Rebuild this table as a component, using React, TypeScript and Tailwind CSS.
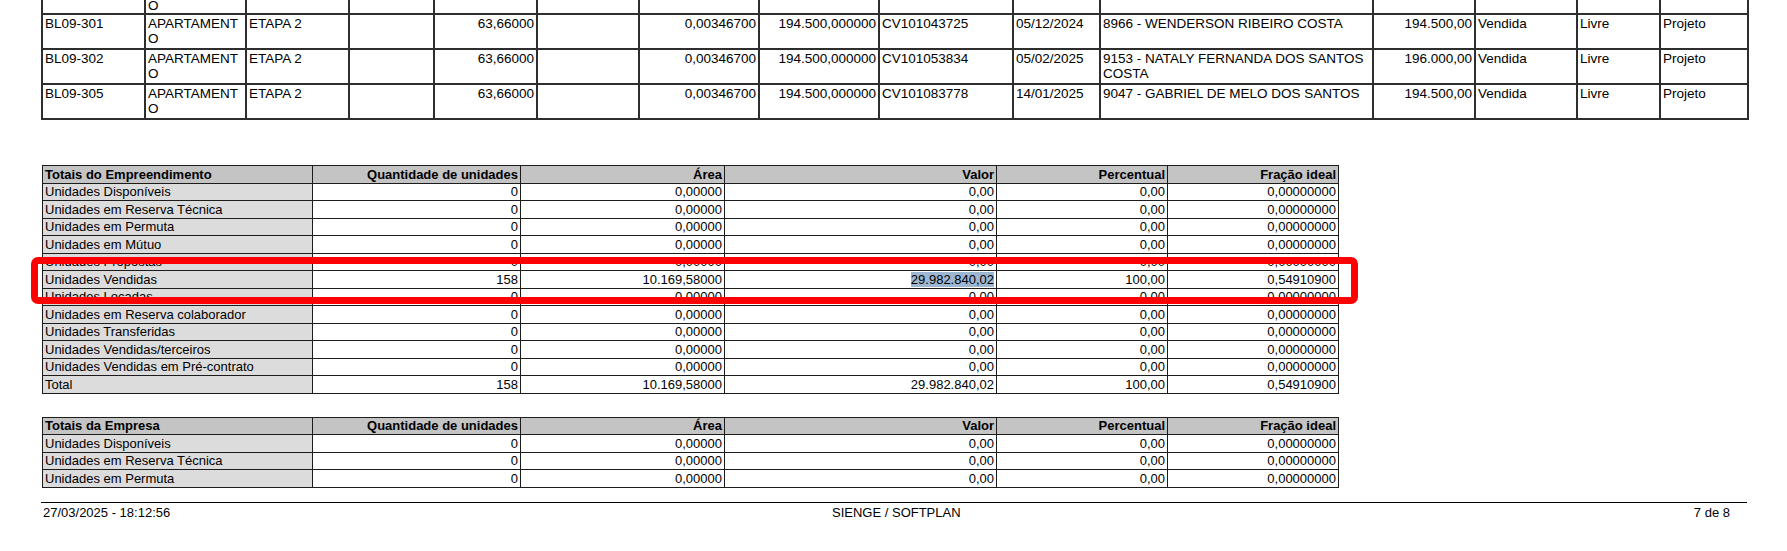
import React from "react";

const topRows: string[][] = [
  ["BL09-301", "APARTAMENT\nO", "ETAPA 2", "", "63,66000", "", "0,00346700", "194.500,000000", "CV101043725", "05/12/2024", "8966 - WENDERSON RIBEIRO COSTA", "194.500,00", "Vendida", "Livre", "Projeto"],
  ["BL09-302", "APARTAMENT\nO", "ETAPA 2", "", "63,66000", "", "0,00346700", "194.500,000000", "CV101053834", "05/02/2025", "9153 - NATALY FERNANDA DOS SANTOS\nCOSTA", "196.000,00", "Vendida", "Livre", "Projeto"],
  ["BL09-305", "APARTAMENT\nO", "ETAPA 2", "", "63,66000", "", "0,00346700", "194.500,000000", "CV101083778", "14/01/2025", "9047 - GABRIEL DE MELO DOS SANTOS", "194.500,00", "Vendida", "Livre", "Projeto"],
];

const rightCols = new Set([4, 6, 7, 11]);

const zero = ["0", "0,00000", "0,00", "0,00", "0,00000000"];
const sold = ["158", "10.169,58000", "29.982.840,02", "100,00", "0,54910900"];

const empRows: [string, string[]][] = [
  ["Unidades Disponíveis", zero],
  ["Unidades em Reserva Técnica", zero],
  ["Unidades em Permuta", zero],
  ["Unidades em Mútuo", zero],
  ["Unidades Propostas", zero],
  ["Unidades Vendidas", sold],
  ["Unidades Locadas", zero],
  ["Unidades em Reserva colaborador", zero],
  ["Unidades Transferidas", zero],
  ["Unidades Vendidas/terceiros", zero],
  ["Unidades Vendidas em Pré-contrato", zero],
  ["Total", sold],
];

const companyRows: [string, string[]][] = [
  ["Unidades Disponíveis", zero],
  ["Unidades em Reserva Técnica", zero],
  ["Unidades em Permuta", zero],
];

function Multi({ text }: { text: string }) {
  const parts = text.split("\n");
  return (
    <>
      {parts.map((p, i) => (
        <React.Fragment key={i}>
          {i > 0 && <br />}
          {p}
        </React.Fragment>
      ))}
    </>
  );
}

function TopColGroup() {
  return (
    <colgroup>
      <col className="w-[103px]" />
      <col className="w-[101px]" />
      <col className="w-[103px]" />
      <col className="w-[85px]" />
      <col className="w-[103px]" />
      <col className="w-[102px]" />
      <col className="w-[120px]" />
      <col className="w-[120px]" />
      <col className="w-[134px]" />
      <col className="w-[87px]" />
      <col className="w-[273px]" />
      <col className="w-[102px]" />
      <col className="w-[102px]" />
      <col className="w-[83px]" />
      <col className="w-[88px]" />
    </colgroup>
  );
}

const topCell = "border-2 border-[#2e2e2e] px-[2px] pt-[1px] align-top text-[13.5px] leading-[15px] text-black whitespace-nowrap overflow-hidden";

function SummaryTable({ title, rows, highlight }: { title: string; rows: [string, string[]][]; highlight?: boolean }) {
  const cell = "border border-[#1c1c1c] px-[2px] text-[13px] leading-[15px] text-black whitespace-nowrap";
  return (
    <table className="border-collapse table-fixed w-[1296px] ml-[42px]">
      <colgroup>
        <col className="w-[270px]" />
        <col className="w-[208px]" />
        <col className="w-[204px]" />
        <col className="w-[272px]" />
        <col className="w-[171px]" />
        <col className="w-[171px]" />
      </colgroup>
      <thead>
        <tr className="h-[17.5px] bg-[#c4c4c4]">
          <th className={`${cell} text-left font-bold`}>{title}</th>
          <th className={`${cell} text-right font-bold`}>Quantidade de unidades</th>
          <th className={`${cell} text-right font-bold`}>Área</th>
          <th className={`${cell} text-right font-bold`}>Valor</th>
          <th className={`${cell} text-right font-bold`}>Percentual</th>
          <th className={`${cell} text-right font-bold`}>Fração ideal</th>
        </tr>
      </thead>
      <tbody>
        {rows.map(([label, vals], i) => (
          <tr key={i} className="h-[17.5px]">
            <td className={`${cell} text-left bg-[#dcdcdc]`}>{label}</td>
            {vals.map((v, j) => (
              <td key={j} className={`${cell} text-right bg-white`}>
                {highlight && label === "Unidades Vendidas" && j === 2 ? (
                  <span className="bg-[#9db6d2]">{v}</span>
                ) : (
                  v
                )}
              </td>
            ))}
          </tr>
        ))}
      </tbody>
    </table>
  );
}

export default function App() {
  return (
    <div className="relative w-[1787px] h-[551px] bg-white overflow-hidden font-['Liberation_Sans',Arial,sans-serif]">
      <table className="border-collapse table-fixed w-[1706px] ml-[41px] -mt-[5px]">
        <TopColGroup />
        <tbody>
          <tr className="h-[12px]">
            {Array.from({ length: 15 }).map((_, i) => (
              <td key={i} className={`${topCell} border-t-0 pt-[3px] leading-[9px]`}>
                {i === 1 ? "O" : ""}
              </td>
            ))}
          </tr>
          {topRows.map((r, ri) => (
            <tr key={ri} className="h-[35px]">
              {r.map((c, ci) => (
                <td key={ci} className={`${topCell} ${rightCols.has(ci) ? "text-right" : "text-left"}`}>
                  <Multi text={c} />
                </td>
              ))}
            </tr>
          ))}
        </tbody>
      </table>

      <div className="mt-[45px]">
        <SummaryTable title="Totais do Empreendimento" rows={empRows} highlight />
      </div>

      <div className="mt-[23px]">
        <SummaryTable title="Totais da Empresa" rows={companyRows} />
      </div>

      <div className="mt-[14px] ml-[41px] w-[1706px] border-t border-black flex text-[13px] leading-[15px] text-black pt-[2px]">
        <span className="w-[791px] pl-[2px]">27/03/2025 - 18:12:56</span>
        <span>SIENGE / SOFTPLAN</span>
        <span className="ml-auto mr-[17px]">7 de 8</span>
      </div>

      <div className="absolute left-[31px] top-[257px] w-[1327px] h-[47px] border-[7px] border-[#ff0000] rounded-[7px] pointer-events-none" />
    </div>
  );
}
